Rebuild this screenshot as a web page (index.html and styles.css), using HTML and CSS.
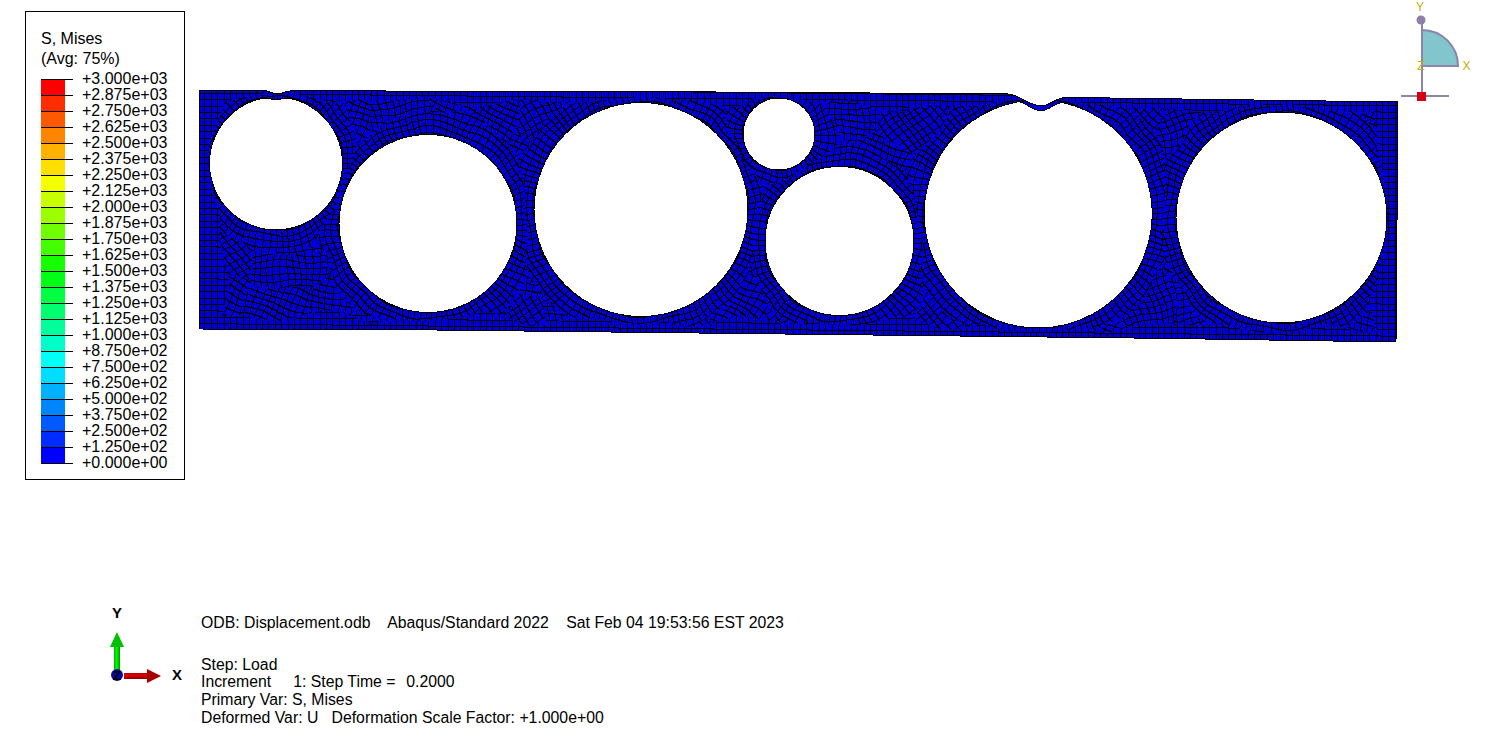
FILE: index.html
```html
<!DOCTYPE html>
<html lang="en">
<head>
<meta charset="utf-8">
<title>S, Mises</title>
<link rel="stylesheet" href="styles.css">
</head>
<body>
<main class="viewport">
  <svg class="scene" viewBox="0 0 1511 740" width="1511" height="740" xmlns="http://www.w3.org/2000/svg">
    <defs>
      <path id="plate-shape" clip-rule="evenodd" fill-rule="evenodd" d="M199,90 L263,90 C268,90 272,94 277,94 C282,94 285,91 291,90.8 L620,91.5 L773,92.3 L1008,94 C1018,94 1030,106 1041,106 C1050,106 1056,97.4 1066,97.4 L1398,102 L1396,342 L1160,338.3 L410,329.7 L199,329 Z
      M264,98 A66.5,66.5 0 1 0 288,98 C284,98 281,99.5 276,99.5 C271,99.5 268,98 264,98 Z
      M339,223.5 A89,89 0 1 0 517,223.5 A89,89 0 1 0 339,223.5 Z
      M534,209.5 A107,107 0 1 0 748,209.5 A107,107 0 1 0 534,209.5 Z
      M743,134 A36,36 0 1 0 815,134 A36,36 0 1 0 743,134 Z
      M765,241 A74.5,74.5 0 1 0 914,241 A74.5,74.5 0 1 0 765,241 Z
      M1019,101.6 A114,114 0 1 0 1063,102.7 C1053,103 1050,110.6 1041,110.6 C1030,110.6 1028,103 1019,101.6 Z
      M1176,217.5 A105.5,105.5 0 1 0 1387,217.5 A105.5,105.5 0 1 0 1176,217.5 Z"/>
      <clipPath id="plate-clip"><use href="#plate-shape"/></clipPath>
      <linearGradient id="shaft-green" x1="0" x2="1" y1="0" y2="0">
        <stop offset="0" stop-color="#00b000"/><stop offset=".45" stop-color="#00ff00"/><stop offset="1" stop-color="#009000"/>
      </linearGradient>
      <linearGradient id="shaft-red" x1="0" x2="0" y1="0" y2="1">
        <stop offset="0" stop-color="#c00000"/><stop offset=".45" stop-color="#e00000"/><stop offset="1" stop-color="#800000"/>
      </linearGradient>
    </defs>

    <use href="#plate-shape" class="plate-fill"/>
    <g clip-path="url(#plate-clip)"><path id="mesh" class="mesh"/></g>
    <use href="#plate-shape" class="plate-edge"/>

    <g class="compass">
      <path class="compass-quarter" d="M1422,30 A36,36 0 0 1 1458,66 L1422,66 Z"/>
      <path class="compass-line" d="M1422,20 V96 M1401,96 H1449"/>
      <circle class="compass-dot" cx="1421" cy="20" r="4.5"/>
      <rect class="compass-origin" x="1417" y="92" width="9" height="9"/>
      <text class="compass-label" x="1420" y="11" text-anchor="middle">Y</text>
      <text class="compass-label" x="1421" y="70" text-anchor="middle">Z</text>
      <text class="compass-label" x="1466.500" y="70" text-anchor="middle">X</text>
    </g>

    <g class="triad">
      <path fill="url(#shaft-green)" d="M114,647 H120 V670 H114 Z"/>
      <path class="arrow-green" d="M117,632 L124,647 H110 Z"/>
      <path fill="url(#shaft-red)" d="M124,673 H147 V679 H124 Z"/>
      <path class="arrow-red" d="M147,669 L161,676 L147,683 Z"/>
      <circle class="triad-hub" cx="117" cy="675" r="6"/>
      <text class="triad-label" x="117" y="618" text-anchor="middle">Y</text>
      <text class="triad-label triad-z" x="117" y="680" text-anchor="middle">Z</text>
      <text class="triad-label" x="177" y="680" text-anchor="middle">X</text>
    </g>
  </svg>

  <aside class="legend">
    <h1 class="legend-title">S, Mises<br>(Avg: 75%)</h1>
    <div class="legend-body">
      <div class="legend-bar">
        <div class="band" style="--c:hsl(0,100%,50%)"></div>
        <div class="band" style="--c:hsl(10.400,100%,50%)"></div>
        <div class="band" style="--c:hsl(20.900,100%,50%)"></div>
        <div class="band" style="--c:hsl(31.300,100%,50%)"></div>
        <div class="band" style="--c:hsl(41.700,100%,50%)"></div>
        <div class="band" style="--c:hsl(52.200,100%,50%)"></div>
        <div class="band" style="--c:hsl(62.600,100%,50%)"></div>
        <div class="band" style="--c:hsl(73,100%,50%)"></div>
        <div class="band" style="--c:hsl(83.500,100%,50%)"></div>
        <div class="band" style="--c:hsl(93.900,100%,50%)"></div>
        <div class="band" style="--c:hsl(104.300,100%,50%)"></div>
        <div class="band" style="--c:hsl(114.800,100%,50%)"></div>
        <div class="band" style="--c:hsl(125.200,100%,50%)"></div>
        <div class="band" style="--c:hsl(135.700,100%,50%)"></div>
        <div class="band" style="--c:hsl(146,100%,50%)"></div>
        <div class="band" style="--c:hsl(156.500,100%,50%)"></div>
        <div class="band" style="--c:hsl(167,100%,50%)"></div>
        <div class="band" style="--c:hsl(177.400,100%,50%)"></div>
        <div class="band" style="--c:hsl(187.800,100%,50%)"></div>
        <div class="band" style="--c:hsl(198.300,100%,50%)"></div>
        <div class="band" style="--c:hsl(208.700,100%,50%)"></div>
        <div class="band" style="--c:hsl(219,100%,50%)"></div>
        <div class="band" style="--c:hsl(229.600,100%,50%)"></div>
        <div class="band" style="--c:hsl(240,100%,50%)"></div>
      </div>
      <ul class="legend-labels">
        <li>+3.000e+03</li><li>+2.875e+03</li><li>+2.750e+03</li><li>+2.625e+03</li><li>+2.500e+03</li>
        <li>+2.375e+03</li><li>+2.250e+03</li><li>+2.125e+03</li><li>+2.000e+03</li><li>+1.875e+03</li>
        <li>+1.750e+03</li><li>+1.625e+03</li><li>+1.500e+03</li><li>+1.375e+03</li><li>+1.250e+03</li>
        <li>+1.125e+03</li><li>+1.000e+03</li><li>+8.750e+02</li><li>+7.500e+02</li><li>+6.250e+02</li>
        <li>+5.000e+02</li><li>+3.750e+02</li><li>+2.500e+02</li><li>+1.250e+02</li><li>+0.000e+00</li>
      </ul>
    </div>
  </aside>

  <section class="notes">
    <p class="notes-head">ODB: Displacement.odb    Abaqus/Standard 2022    Sat Feb 04 19:53:56 EST 2023</p>
    <p class="notes-line">Step: Load</p>
    <p class="notes-line">Increment     1: Step Time =  <span class="notes-value">0.2000</span></p>
    <p class="notes-line">Primary Var: S, Mises</p>
    <p class="notes-line">Deformed Var: U   Deformation Scale Factor: +1.000e+00</p>
  </section>
</main>
<script src="mesh.js"></script>
</body>
</html>
```
FILE: styles.css
```css
* { box-sizing: border-box; }
html, body { margin: 0; padding: 0; background: #fff; }
body { width: 1511px; height: 740px; overflow: hidden; font-family: "Liberation Sans", Arial, sans-serif; color: #000; }
.viewport { position: relative; width: 1511px; height: 740px; }
.scene { display: block; }

.plate-fill { fill: #0000d4; stroke: none; shape-rendering: crispEdges; }
.mesh { fill: none; stroke: #000; stroke-width: 1; shape-rendering: crispEdges; }
.plate-edge { fill: none; stroke: #000; stroke-width: 1; shape-rendering: crispEdges; }

.compass-quarter { fill: #82c5cc; stroke: #8d84ad; stroke-width: 2; }
.compass-line { fill: none; stroke: #8d84ad; stroke-width: 2; shape-rendering: crispEdges; }
.compass-dot { fill: #8d7fa8; }
.compass-origin { fill: #d40012; }
.compass-label { font-size: 12px; fill: #c4ae00; }

.arrow-green { fill: #00c000; }
.arrow-red { fill: #a80000; }
.triad-hub { fill: #0a0a9a; }
.triad-label { font-size: 15px; font-weight: 700; fill: #000; }
.triad-z { font-size: 13px; }

.legend { position: absolute; left: 25px; top: 11px; width: 160px; height: 469px; border: 1px solid #000; background: #fff; padding: 17px 15px 0; }
.legend-title { margin: 0; font-size: 16px; font-weight: 400; line-height: 20px; }
.legend-body { display: flex; align-items: flex-start; margin-top: 10px; }
.legend-bar { width: 32px; flex: none; border-bottom: 1px solid #000; }
.band { height: 16px; border-top: 1px solid #000; background: linear-gradient(var(--c), var(--c)) no-repeat left top / 24px 100%; }
.legend-labels { list-style: none; margin: -8px 0 0 9px; padding: 0; font-size: 16px; line-height: 16px; white-space: nowrap; }

.notes { position: absolute; left: 201px; top: 614px; font-size: 15.800px; line-height: 17.700px; }
.notes p { margin: 0; white-space: pre; }
.notes .notes-head { margin-bottom: 24px; }
.notes-value { margin-left: 2px; }
```
FILE: mesh.js
```js
(function () {
  var holes = [
    [276, 163, 66.5], [428, 223.5, 89], [641, 209.5, 107], [779, 134, 36],
    [839.5, 241, 74.5], [1038, 214, 114], [1281.5, 217.5, 105.5]
  ];
  var CELL = 6.4, LEFT = 199, RIGHT = 1398, TOP = 88, BOTTOM = 344;
  var seed = 9871;
  function rnd() { seed = (seed * 1664525 + 1013904223) >>> 0; return seed / 4294967296; }

  holes.forEach(function (h) {
    h.push(Math.round(2 * Math.PI * (h[2] + 12) / CELL));
    h.push(rnd() * 6.28);
  });

  var SEED_STEP = 64, seeds = [];
  for (var sx = LEFT; sx < RIGHT + SEED_STEP; sx += SEED_STEP) {
    for (var sy = TOP; sy < BOTTOM + SEED_STEP; sy += SEED_STEP) {
      seeds.push({
        x: sx + rnd() * SEED_STEP,
        y: sy + rnd() * SEED_STEP,
        a: (rnd() - 0.5) * 1.5,
        ox: rnd() * CELL,
        oy: rnd() * CELL
      });
    }
  }

  function cellAt(x, y) {
    var wx = x + 1.3 * Math.sin(y / 8.7 + x / 13.1) + 0.8 * Math.sin(x / 6.1 - y / 11.3);
    var wy = y + 1.3 * Math.cos(x / 9.3 - y / 14.7) + 0.8 * Math.sin(y / 6.7 + x / 10.9);
    var wave = 4 * Math.sin(x / 23 + y / 17) + 3 * Math.sin(x / 13 - y / 29);

    var best = -1, bestD = 1e9, bestR = 0, k, h, r, d;
    for (k = 0; k < holes.length; k++) {
      h = holes[k];
      r = Math.hypot(wx - h[0], wy - h[1]);
      d = r - h[2];
      if (d < bestD) { bestD = d; best = k; bestR = r; }
    }
    if (bestD < -2.5) return null;

    var yb = 329 + (x - LEFT) * 0.0108;
    var yt = 90 + (x - LEFT) * 0.0098;
    var edge = Math.min(x - LEFT - 10, RIGHT - x - 10, yb - y, (y - yt) * 1.4);
    if (edge < 13 + wave && edge < bestD * 1.3) {
      return ["E", Math.floor((x - LEFT) / CELL), Math.floor((y - x * 0.0105 - 2) / CELL)];
    }
    if (bestD < 23 + wave) {
      h = holes[best];
      var t = Math.atan2(wy - h[1], wx - h[0]) + h[4];
      t = (t + 12.566) % 6.2832;
      return ["P" + best, Math.floor(bestD / CELL), Math.floor(t * h[3] / 6.2832)];
    }
    var s = null, sd = 1e12;
    for (k = 0; k < seeds.length; k++) {
      var dx = wx - seeds[k].x, dy = wy - seeds[k].y, q = dx * dx + dy * dy;
      if (q < sd) { sd = q; s = k; }
    }
    var g = seeds[s], c = Math.cos(g.a), n = Math.sin(g.a);
    return ["V" + s,
      Math.floor((c * wx + n * wy + g.ox) / CELL),
      Math.floor((-n * wx + c * wy + g.oy) / CELL)];
  }

  function isLine(a, b) {
    if (!a || !b) return false;
    if (a[0] !== b[0]) return false;
    return a[1] !== b[1] || a[2] !== b[2];
  }

  var W = RIGHT - LEFT + 1, prevRow = null, parts = [];
  for (var y = BOTTOM; y >= TOP; y--) {
    var row = [], runStart = -1;
    for (var x = RIGHT; x >= LEFT; x--) row[x - LEFT] = cellAt(x + 0.5, y + 0.5);
    for (var i = 0; i < W; i++) {
      var black = isLine(row[i], row[i + 1]) || (prevRow && isLine(row[i], prevRow[i]));
      if (black && runStart < 0) runStart = i;
      if (!black && runStart >= 0) {
        parts.push("M" + (LEFT + runStart) + "," + (y + 0.5) + "h" + (i - runStart));
        runStart = -1;
      }
    }
    if (runStart >= 0) parts.push("M" + (LEFT + runStart) + "," + (y + 0.5) + "h" + (W - runStart));
    prevRow = row;
  }

  document.getElementById("mesh").setAttribute("d", parts.join(""));
})();
```
